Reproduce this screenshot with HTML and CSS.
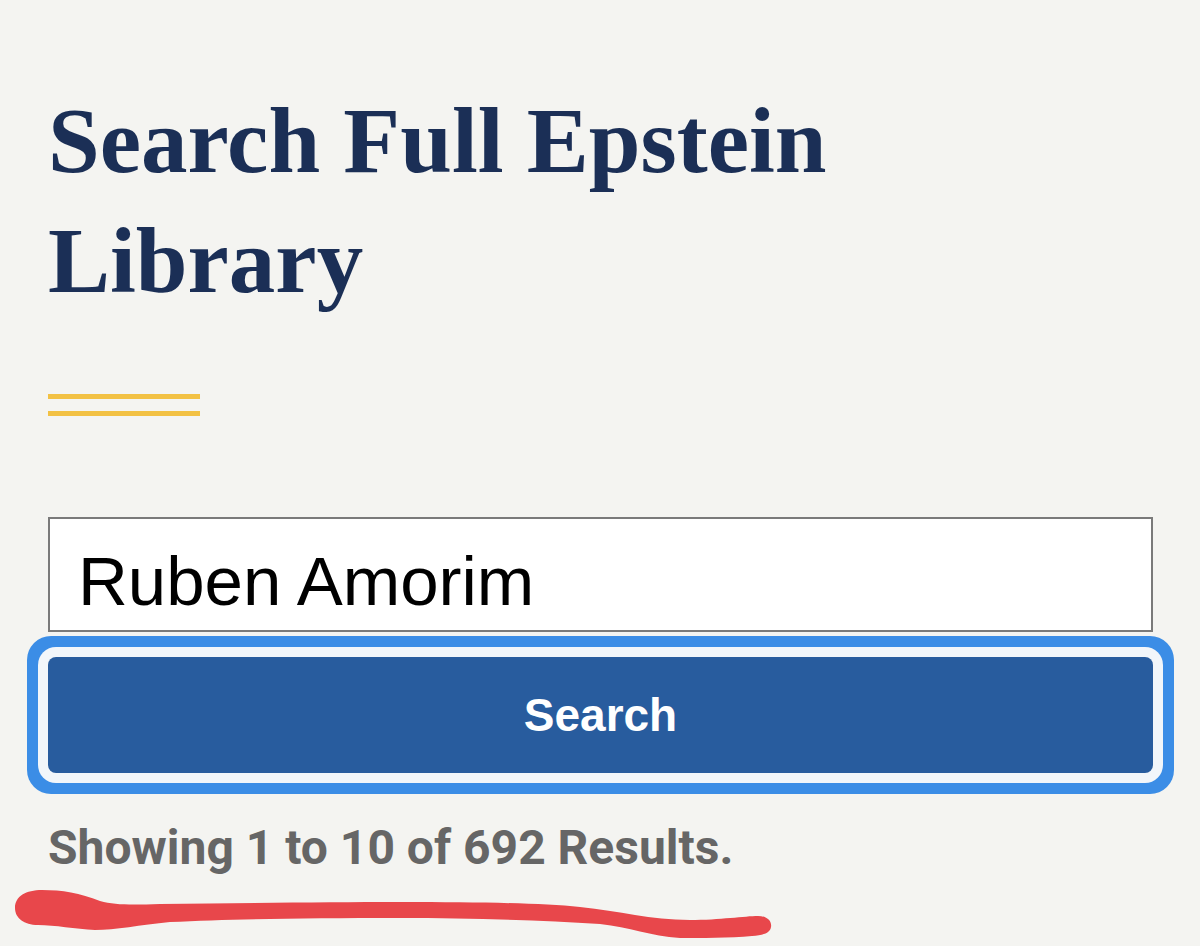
FILE: index.html
```html
<!DOCTYPE html>
<html lang="en">
<head>
    <meta charset="UTF-8">
    <meta name="viewport" content="width=device-width, initial-scale=1.0">
    <title>Search Full Epstein Library</title>
    <link rel="stylesheet" href="styles.css">
</head>
<body>

    <div class="page">
        <h1 class="title">Search Full Epstein Library</h1>

        <div class="rule">
            <span></span>
            <span></span>
        </div>

        <form class="search-form" onsubmit="return false;">
            <input type="text" class="search-input" value="Ruben Amorim">
            <button type="submit" class="search-button">Search</button>
        </form>

        <p class="results">Showing 1 to 10 of 692 Results.</p>

        <!-- hand drawn marker underline -->
        <svg class="scribble" width="800" height="76" viewBox="0 0 800 76">
            <path fill="#e8474b" d="M15 38
                C15 26, 26 20, 42 20
                C62 20, 80 23, 100 31
                C115 35, 130 35, 160 34
                C250 33, 330 32, 400 32
                C480 32, 540 33, 580 37
                C620 41, 650 50, 690 50
                C720 50, 745 46, 758 46
                C768 46, 772 52, 771 57
                C770 63, 764 65, 752 66
                C730 68, 700 68, 680 68
                C650 66, 630 57, 600 54
                C540 50, 470 48, 400 48
                C300 48, 230 49, 170 52
                C140 55, 115 60, 95 60
                C75 59, 55 55, 38 55
                C24 55, 15 48, 15 38 Z"/>
        </svg>
    </div>

</body>
</html>
```

FILE: styles.css
```css
body {
    margin: 0;
    padding: 0;
    background-color: #f4f4f1; /* warm off-white */
    overflow: hidden;
}
.page {
    padding: 0 47px 0 48px;
}
.title {
    font-family: 'Liberation Serif', 'Times New Roman', serif;
    font-weight: bold;
    font-size: 93px;
    line-height: 120px;
    color: #1b2f56; /* navy */
    margin: 81px 0 0 0;
    max-width: 900px;
}
.rule {
    display: flex;
    flex-direction: column;
    gap: 12px;
    width: 152px;
    margin-top: 73px;
}
.rule span {
    display: block;
    height: 5px;
    background-color: #f2c144; /* gold */
}
.search-form {
    display: flex;
    flex-direction: column;
    margin-top: 101px;
}
.search-input {
    box-sizing: border-box;
    width: 100%;
    height: 115px;
    padding: 14px 29px 0 28px;
    margin: 0;
    border: 2px solid #7a7a7a;
    border-radius: 0;
    background: #fff;
    color: #000;
    font-family: 'Liberation Sans', Arial, sans-serif;
    font-size: 69px;
    outline: none;
}
.search-button {
    box-sizing: border-box;
    width: 100%;
    height: 116px;
    margin-top: 25px;
    border: none;
    border-radius: 8px;
    background-color: #285c9e; /* dark blue */
    color: #fff;
    font-family: 'Liberation Sans', Arial, sans-serif;
    font-weight: bold;
    font-size: 46px;
    cursor: pointer;
    /* focus ring */
    box-shadow: 0 0 0 10px #f2f6fa, 0 0 0 21px #3b8de6;
}
.results {
    font-family: Roboto, 'Liberation Sans', sans-serif;
    font-weight: bold;
    font-size: 48px;
    line-height: 56px;
    color: #666;
    margin: 47px 0 0 0;
}
.scribble {
    display: block;
    margin: -6px 0 0 -48px;
}
```
